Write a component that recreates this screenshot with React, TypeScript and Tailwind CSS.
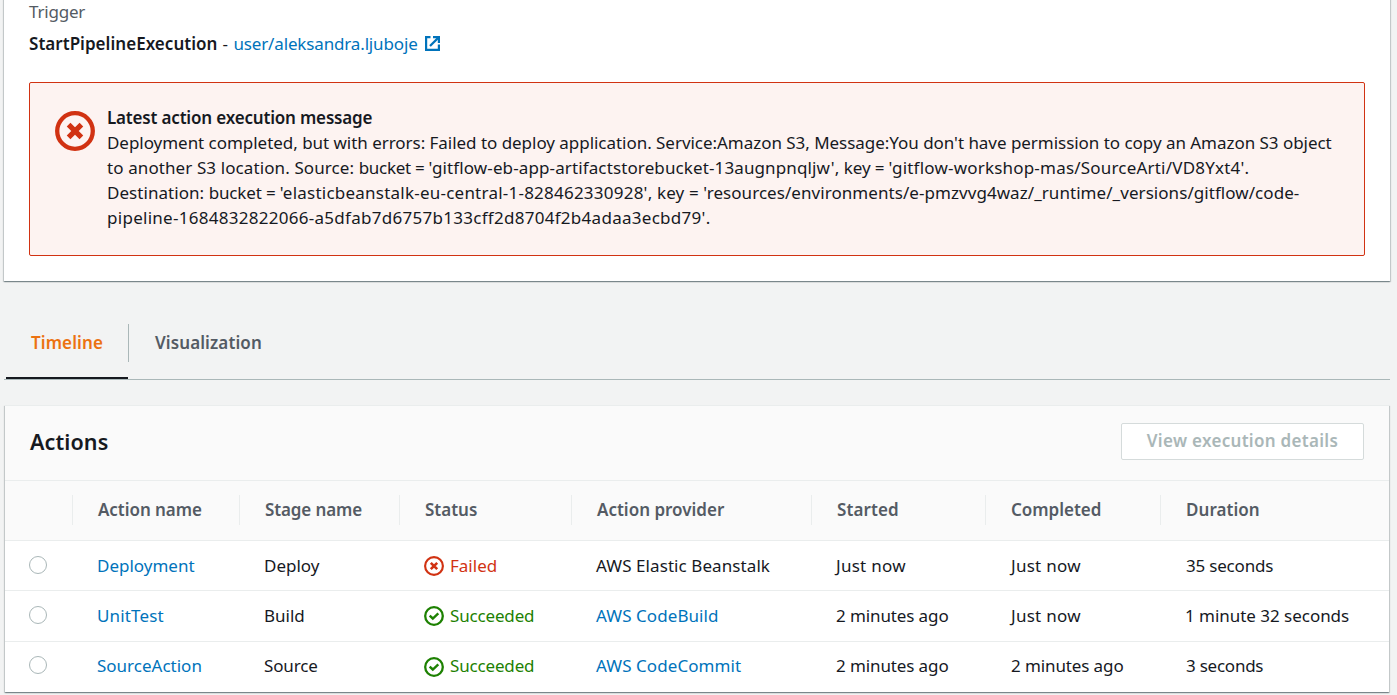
import type { ReactNode } from "react";

const cardShadow =
  "shadow-[0_1px_1px_0_rgba(0,28,36,0.3),1px_1px_1px_0_rgba(0,28,36,0.15),-1px_1px_1px_0_rgba(0,28,36,0.15)]";

function ErrorIcon({ className }: { className: string }) {
  return (
    <svg viewBox="0 0 40 40" className={className} fill="none" stroke="currentColor">
      <circle cx="20" cy="20" r="17.8" strokeWidth="4.3" />
      <path d="M13.6 13.6 26.4 26.4M26.4 13.6 13.6 26.4" strokeWidth="5.2" />
    </svg>
  );
}

function SuccessIcon({ className }: { className: string }) {
  return (
    <svg viewBox="0 0 20 20" className={className} fill="none" stroke="currentColor">
      <circle cx="10" cy="10" r="8.8" strokeWidth="2.3" />
      <path d="M5.7 9.6 8.8 12.5 14.3 7.3" strokeWidth="2.4" />
    </svg>
  );
}

function ExternalIcon() {
  return (
    <svg viewBox="0 0 15 15" className="h-[15px] w-[15px]" fill="none" stroke="currentColor" strokeWidth="2.2">
      <path d="M5.5 1.1H1.1v12.8h12.8V8.5" />
      <path d="M8 1.1h5.9V7" />
      <path d="M13.9 1.1 5 10" />
    </svg>
  );
}

const columns: { label: string; className: string }[] = [
  { label: "Action name", className: "tracking-[-0.05px]" },
  { label: "Stage name", className: "tracking-[-0.12px]" },
  { label: "Status", className: "" },
  { label: "Action provider", className: "" },
  { label: "Started", className: "tracking-[0.08px]" },
  { label: "Completed", className: "tracking-[-0.02px]" },
  { label: "Duration", className: "tracking-[0.05px]" },
];

type Row = {
  name: ReactNode;
  stage: ReactNode;
  failed?: boolean;
  provider: ReactNode;
  started: ReactNode;
  completed: ReactNode;
  duration: ReactNode;
  height: string;
  radio: string;
  icon: string;
};

const minutesAgo = <span className="tracking-[-0.11px]">2 minutes ago</span>;
const justNow = <span className="tracking-[0.27px]">Just now</span>;

const rows: Row[] = [
  {
    name: "Deployment",
    stage: "Deploy",
    failed: true,
    provider: <span className="tracking-[0.08px]">AWS Elastic Beanstalk</span>,
    started: justNow,
    completed: justNow,
    duration: <span className="tracking-[-0.2px]">35 seconds</span>,
    height: "h-[50px] pt-3",
    radio: "mt-[3px]",
    icon: "mt-[3px]",
  },
  {
    name: <span className="tracking-[0.15px]">UnitTest</span>,
    stage: "Build",
    provider: <a className="tracking-[0.07px] text-[#0073bb]">AWS CodeBuild</a>,
    started: minutesAgo,
    completed: justNow,
    duration: <span className="-ml-px tracking-[-0.03px]">1 minute 32 seconds</span>,
    height: "h-[51px] pt-3",
    radio: "mt-[3px]",
    icon: "mt-[3px]",
  },
  {
    name: "SourceAction",
    stage: <span className="tracking-[-0.15px]">Source</span>,
    provider: <a className="tracking-[0.07px] text-[#0073bb]">AWS CodeCommit</a>,
    started: minutesAgo,
    completed: minutesAgo,
    duration: <span className="tracking-[-0.24px]">3 seconds</span>,
    height: "h-[50px] pt-[11px]",
    radio: "mt-[3px]",
    icon: "mt-[4px]",
  },
];

const gridCols = "grid grid-cols-[68px_167px_160px_172px_240px_174px_175px_228px]";

function ActionsTable() {
  return (
    <div>
      <div className={`${gridCols} h-[61px] border-y border-[#eaeded] bg-[#fafafa] font-semibold text-[#545b64]`}>
        <div className="mb-[15px] mt-[14px] border-r border-[#eaeded]" />
        {columns.map((c, i) => (
          <div
            key={c.label}
            className={`mb-[15px] mt-[14px] pl-[25px] pt-[2px] ${i < columns.length - 1 ? "border-r border-[#eaeded]" : ""}`}
          >
            <span className={c.className}>{c.label}</span>
          </div>
        ))}
      </div>
      {rows.map((r, i) => (
        <div
          key={i}
          className={`${gridCols} ${r.height} whitespace-nowrap ${i < rows.length - 1 ? "border-b border-[#eaeded]" : ""}`}
        >
          <div className="pl-6">
            <div className={`${r.radio} h-[18px] w-[18px] rounded-full border border-[#aab7b8] bg-white`} />
          </div>
          <a className="pl-6 text-[#0073bb]">{r.name}</a>
          <div className="pl-6">{r.stage}</div>
          <div className={`flex gap-[6px] pl-6 ${r.failed ? "text-[#d13212]" : "text-[#1d8102]"}`}>
            {r.failed ? (
              <ErrorIcon className={`${r.icon} h-5 w-5 shrink-0`} />
            ) : (
              <SuccessIcon className={`${r.icon} h-5 w-5 shrink-0`} />
            )}
            {r.failed ? <span>Failed</span> : <span className="tracking-[-0.16px]">Succeeded</span>}
          </div>
          <div className="pl-6">{r.provider}</div>
          <div className="pl-6">{r.started}</div>
          <div className="pl-[25px]">{r.completed}</div>
          <div className="pl-[25px]">{r.duration}</div>
        </div>
      ))}
    </div>
  );
}

export default function App() {
  return (
    <main className="h-[695px] overflow-hidden bg-[#f2f3f3] font-['Noto_Sans','Open_Sans',sans-serif] text-[17px] leading-[25px] text-[#16191f]">
      <section className={`-mt-px ml-1 h-[282px] w-[1386px] bg-white px-[25px] ${cardShadow}`}>
        <div className="h-8 tracking-[-0.2px] text-[#545b64]">Trigger</div>
        <div className="flex h-[25px] whitespace-nowrap">
          <span className="font-semibold tracking-[0.03px]">StartPipelineExecution</span>
          <span className="ml-[5px] w-[11px]">-</span>
          <a className="flex text-[#0073bb]">
            <span className="w-[187px] tracking-[-0.15px]">user/aleksandra.ljuboje</span>
            <span className="ml-[5px] mt-[5px]">
              <ExternalIcon />
            </span>
          </a>
        </div>
        <div className="mt-[26px] flex h-[174px] rounded-[2px] border border-[#d13212] bg-[#fdf3f1] pl-[25px] pt-[22px]">
          <ErrorIcon className="mt-[6px] h-10 w-10 shrink-0 text-[#d13212]" />
          <div className="ml-3 whitespace-nowrap">
            <div className="font-semibold tracking-[-0.18px]">Latest action execution message</div>
            <div className="tracking-[-0.036px]">
              Deployment completed, but with errors: Failed to deploy application. Service:Amazon S3, Message:You don't
              have permission to copy an Amazon S3 object
            </div>
            <div className="tracking-[0.1px]">
              to another S3 location. Source: <span className="tracking-[-0.3px]">bucket = </span>
              <span className="tracking-[0.12px]">'gitflow-eb-app-artifactstorebucket-13augnpnqljw', </span>
              <span className="tracking-[-0.15px]">key = </span>
              <span className="tracking-[0.2px]">'gitflow-workshop-mas/SourceArti/VD8Yxt4'.</span>
            </div>
            <div className="tracking-[0.05px]">
              Destination: <span className="tracking-[-0.15px]">bucket = </span>
              <span className="tracking-[0.23px]">'elasticbeanstalk-eu-central-1-828462330928', </span>
              <span className="tracking-[0.1px]">key = </span>
              <span className="tracking-[0.06px]">
                'resources/environments/e-pmzvvg4waz/_runtime/_versions/gitflow/code-
              </span>
            </div>
            <div className="tracking-[0.28px]">
              pipeline-1684832822066-a5dfab7d6757b133cff2d8704f2b4adaa3ecbd79'.
            </div>
          </div>
        </div>
      </section>

      <nav className="ml-1 mt-[43px] flex h-14 w-[1386px] border-b border-[#aab7b8] pl-[2px] font-semibold">
        <div className="h-[55px] w-[122px] border-b-2 border-[#16191f] pl-[25px] pt-[6px] tracking-[0.1px] text-[#ec7211]">
          Timeline
        </div>
        <div className="h-[38px] border-l border-[#aab7b8] pl-[26px] pt-[6px] tracking-[0.1px] text-[#545b64]">
          Visualization
        </div>
      </nav>

      <section className={`ml-[5px] mt-[25px] w-[1384px] border-t border-[#eaeded] bg-white ${cardShadow}`}>
        <header className="flex h-[74px] items-start justify-between bg-[#fafafa] px-[25px] pt-[17px]">
          <h2 className="pt-[6px] text-[21.5px] font-semibold tracking-[0.1px]">Actions</h2>
          <button className="h-[37px] w-[243px] rounded-[2px] border border-[#d5dbdb] bg-white pb-[2px] font-semibold tracking-[0.3px] text-[#aab7b8]">
            View execution details
          </button>
        </header>
        <ActionsTable />
      </section>
    </main>
  );
}
